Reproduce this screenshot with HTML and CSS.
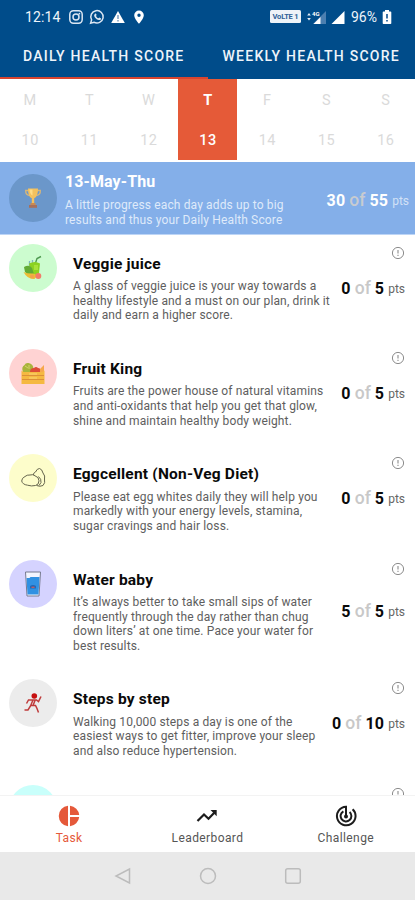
FILE: index.html
```html
<!DOCTYPE html>
<html lang="en">
<head>
<meta charset="utf-8">
<title>Daily Health Score</title>
<link rel="stylesheet" href="styles.css">
</head>
<body>
<svg width="0" height="0" class="defs">
  <symbol id="info" viewBox="0 0 14 14"><circle cx="7" cy="7" r="5.600" fill="none" stroke="#8c8c8c" stroke-width="1"/><path d="M7 3.900v3.600M7 8.800v1.200" stroke="#8c8c8c" stroke-width="1.100"/></symbol>
</svg>
<div class="app">
  <header class="top">
    <div class="status">
      <span class="time">12:14</span>
      <svg class="left-icons" width="78" height="16" viewBox="0 0 78 16">
        <g fill="none" stroke="#dbe6f2" stroke-width="1.500">
          <rect x="1.800" y="1.800" width="12.400" height="12.400" rx="3.600"/><circle cx="8" cy="8" r="3"/>
          <path d="M22.600 14.200l1-3.300a6.200 6.200 0 1 1 2.300 2.300z"/>
        </g>
        <circle cx="11.400" cy="4.700" r=".9" fill="#dbe6f2"/>
        <path d="M26.600 5.200c.8-1.100 1.500-.6 2 .9l-.6.9c.6 1.200 1.300 1.800 2.400 2.300l1-.8 1.700.9c.1 1.400-1.300 1.900-2.400 1.600-2.300-.6-4.400-2.700-4.600-4.600z" fill="#dbe6f2"/>
        <path d="M50 2l6.800 12H43.200z" fill="#fff"/><path d="M50 6v4M50 11v1.500" stroke="#5b84b0" stroke-width="1.200"/>
        <path fill-rule="evenodd" d="M71 1.500a4.800 4.800 0 0 0-4.800 4.800c0 3.500 4.800 8.500 4.800 8.500s4.800-5 4.800-8.500A4.800 4.800 0 0 0 71 1.500zm0 3a1.700 1.700 0 1 1 0 3.400 1.700 1.700 0 0 1 0-3.400z" fill="#fff"/>
      </svg>
      <span class="volte">VoLTE 1</span>
      <svg class="signals" width="40" height="16" viewBox="0 0 40 16">
        <path d="M1.200 6.500l1.800-2.500 1.800 2.500zM1.200 9l1.800 2.500L4.800 9z" fill="#e6eef6"/>
        <path d="M20 2v13H7z" fill="#4c7fb0"/><path d="M14.500 8v7H7.500z" fill="#fff"/>
        <text x="6" y="7" class="fourg">4G</text>
        <path d="M38.500 2v13H25.500z" fill="#fff"/>
      </svg>
      <span class="pct">96%</span>
      <svg class="battery" width="10" height="16" viewBox="0 0 10 16"><path d="M3 1h4v1.500h1.500q.8 0 .8.800v10.900q0 .8-.8.800H1.500q-.8 0-.8-.8V3.300q0-.8.800-.8H3z" fill="#fff"/><path d="M5 5v4.500M5 11v1.500" stroke="#12528f" stroke-width="1.600"/></svg>
    </div>
    <nav class="tabs">
      <div class="tab active"><span>DAILY HEALTH SCORE</span></div>
      <div class="tab"><span>WEEKLY HEALTH SCORE</span></div>
    </nav>
  </header>

  <section class="week">
    <div class="day"><span>M</span><span>10</span></div>
    <div class="day"><span>T</span><span>11</span></div>
    <div class="day"><span>W</span><span>12</span></div>
    <div class="day today"><span class="name">T</span><span>13</span></div>
    <div class="day"><span>F</span><span>14</span></div>
    <div class="day"><span>S</span><span>15</span></div>
    <div class="day"><span>S</span><span>16</span></div>
  </section>

  <section class="summary">
    <div class="disc trophy">
      <svg width="18" height="22" viewBox="0 0 18 22">
        <path d="M4.500 3.500H1.700q-.3 4.500 4 5M13.500 3.500h2.800q.3 4.500-4 5" fill="none" stroke="#d9b777" stroke-width="1.300"/>
        <path d="M4 1.500h10c0 5.500-1.500 9-3.800 9.700v5.300H7.800v-5.300C5.500 10.500 4 7 4 1.500z" fill="#f3c15f"/>
        <path d="M5.500 2.500h3v6q-2.500-1-3-6z" fill="#ffdc86"/>
        <path d="M6.500 16h5v2h-5z" fill="#c98a52"/><path d="M5 18h8v2.800H5z" fill="#a8705a"/>
      </svg>
    </div>
    <div class="text">
      <h2>13-May-Thu</h2>
      <p>A little progress each day adds up to big<br>results and thus your Daily Health Score</p>
    </div>
    <div class="score"><b>30</b> <i>of</i> <b>55</b> <small>pts</small></div>
  </section>

  <main class="list">
    <article class="item">
      <div class="disc green">
        <svg width="24" height="26" viewBox="0 0 24 26">
          <path d="M14.500 8l1.500-4.500 4-2" fill="none" stroke="#4f9a50" stroke-width="1.400"/>
          <path d="M8.500 6v5M11.500 5v5" stroke="#7fb6bd" stroke-width="1.300"/>
          <path d="M8 8.500q6-3 11 0l-1.200 11q-4 2-7.500.5z" fill="#8bd221"/>
          <path d="M3 12q5-3 8 1l2 6q-6 2-9-2z" fill="#62ab35"/>
          <path d="M13 10h4v5h-4z" fill="#a7e239"/>
          <path d="M2.500 17q5 2 10 1.500l4 2-3 3.500q-7 .5-11-7z" fill="#edbd36"/>
          <circle cx="17.300" cy="21" r="3" fill="#f27b68"/><circle cx="11" cy="21.500" r="2" fill="#f2a24b"/>
        </svg>
      </div>
      <div class="text"><h3>Veggie juice</h3><p>A glass of veggie juice is your way towards a<br>healthy lifestyle and a must on our plan, drink it<br>daily and earn a higher score.</p></div>
      <div class="side"><svg class="info"><use href="#info"/></svg><div class="score"><b>0</b> <i>of</i> <b>5</b> <small>pts</small></div></div>
    </article>
    <article class="item">
      <div class="disc red">
        <svg width="26" height="26" viewBox="0 0 26 26">
          <path d="M3 12q-2-5 1.500-7 1-2.500 4-2 5 1 5 6l-1 3z" fill="#a9b43c"/><path d="M5 6l3 2M9 5v4" stroke="#d4d36a"/>
          <path d="M10 12q0-4 4-4 2-2 4 0 3 0 3 4z" fill="#dd4c37"/>
          <path d="M20 9l4-4v7h-4z" fill="#f6a84b"/>
          <path d="M1.500 10.500l2 1.500h19l2-1.500V24h-23z" fill="#f5b941"/>
          <path d="M2 15.500h22M2 19.500h22" stroke="#dc9038"/><path d="M9 14h8M9 18h8" stroke="#fbd475"/>
        </svg>
      </div>
      <div class="text"><h3>Fruit King</h3><p>Fruits are the power house of natural vitamins<br>and anti-oxidants that help you get that glow,<br>shine and maintain healthy body weight.</p></div>
      <div class="side"><svg class="info"><use href="#info"/></svg><div class="score"><b>0</b> <i>of</i> <b>5</b> <small>pts</small></div></div>
    </article>
    <article class="item">
      <div class="disc yellow">
        <svg width="26" height="22" viewBox="0 0 26 22" fill="none" stroke="#66664e" stroke-width="1">
          <path d="M5 9.500q2-1.800 5-1.500 3-1 5 .8 4 1.200 4 5t-3.500 4.700q-4 1-8-.3-5-.7-5.800-4.200 0-3 3.300-4.500z"/>
          <path d="M13.500 8q-.5-2 2-3 1.500-3.500 4-3.500 2.500.5 3.500 4.500 2.500 3 1.500 6 1 4-1.500 6.500-3 1.500-6.500 0M18.500 9.500q3 2.500 2.500 6l-2 3"/>
        </svg>
      </div>
      <div class="text"><h3>Eggcellent (Non-Veg Diet)</h3><p>Please eat egg whites daily they will help you<br>markedly with your energy levels, stamina,<br>sugar cravings and hair loss.</p></div>
      <div class="side"><svg class="info"><use href="#info"/></svg><div class="score"><b>0</b> <i>of</i> <b>5</b> <small>pts</small></div></div>
    </article>
    <article class="item">
      <div class="disc violet">
        <svg width="18" height="26" viewBox="0 0 18 26">
          <path d="M1.500 1h15L15 25H3z" fill="#f3f5ff" stroke="#777a90" stroke-width="1"/>
          <path d="M2.500 7h3l1-1h9L14.500 23.500h-11z" fill="#3191e2"/>
          <path d="M6 15q3-2 6 0v2.500H6z" fill="#2368b5"/><path d="M7.500 16.300h3" stroke="#d65a55" stroke-width="1.200"/>
        </svg>
      </div>
      <div class="text"><h3>Water baby</h3><p>It’s always better to take small sips of water<br>frequently through the day rather than chug<br>down liters’ at one time. Pace your water for<br>best results.</p></div>
      <div class="side"><svg class="info"><use href="#info"/></svg><div class="score"><b>5</b> <i>of</i> <b>5</b> <small>pts</small></div></div>
    </article>
    <article class="item">
      <div class="disc grey">
        <svg width="20" height="22" viewBox="0 0 20 22" fill="none" stroke="#bf3b3b" stroke-width="1.500">
          <circle cx="11.300" cy="4" r="2.800" fill="#c60f0f" stroke="none"/>
          <path d="M3.500 11.500l2-3.500h8l2 1.500 2.500-5M10 8l-2.500 6-2.500 4H1.500M8 13.500h4.500l1.500 3 1.500 4M12 8.500L10 13.500"/>
        </svg>
      </div>
      <div class="text"><h3>Steps by step</h3><p>Walking 10,000 steps a day is one of the<br>easiest ways to get fitter, improve your sleep<br>and also reduce hypertension.</p></div>
      <div class="side"><svg class="info"><use href="#info"/></svg><div class="score"><b>0</b> <i>of</i> <b>10</b> <small>pts</small></div></div>
    </article>
    <article class="item">
      <div class="disc cyan"></div>
      <div class="text"></div>
      <div class="side"><svg class="info"><use href="#info"/></svg></div>
    </article>
  </main>

  <nav class="bottom">
    <div class="dest active">
      <svg width="22" height="22" viewBox="0 0 22 22" fill="#e5593a"><path d="M10 .8v20.400A10.250 10.250 0 0 1 10 .8zM12 .8a10.250 10.250 0 0 1 9.200 9.200H12zM12 12h9.200a10.250 10.250 0 0 1-9.200 9.200z"/></svg>
      <span>Task</span>
    </div>
    <div class="dest">
      <svg width="22" height="22" viewBox="0 0 22 22"><path d="M1.500 16l6.500-6.500 4.500 4.300L19 7" fill="none" stroke="#1c1c1c" stroke-width="2.200"/><path d="M14.500 5h6.200v6.200z" fill="#1c1c1c"/></svg>
      <span>Leaderboard</span>
    </div>
    <div class="dest">
      <svg width="22" height="22" viewBox="0 0 22 22" fill="none" stroke="#1c1c1c" stroke-width="2"><path d="M17.600 4.200A9.300 9.300 0 1 1 11 1.700V11M14.600 7a5.400 5.400 0 1 1-6.200-.7"/><circle cx="11" cy="11.500" r="2" fill="#1c1c1c" stroke="none"/></svg>
      <span>Challenge</span>
    </div>
  </nav>
  <footer class="system">
    <svg width="18" height="18" viewBox="0 0 18 18"><path d="M15.500 2v14L2 9z"/></svg>
    <svg width="18" height="18" viewBox="0 0 18 18"><circle cx="9" cy="9" r="7.500"/></svg>
    <svg width="18" height="18" viewBox="0 0 18 18"><rect x="1.700" y="1.700" width="14.600" height="14.600" rx="2"/></svg>
  </footer>
</div>
</body>
</html>
```
FILE: styles.css
```css
* { box-sizing: border-box; margin: 0; padding: 0; }
body { width: 415px; height: 900px; overflow: hidden; background: #fff; font-family: Roboto, "Liberation Sans", sans-serif; }
svg { display: block; flex: none; }
.defs { position: absolute; }
.app { width: 415px; height: 900px; display: flex; flex-direction: column; overflow: hidden; }

.top { flex: none; height: 79px; background: #004c8a; color: #eef4fa; }
.status { height: 33px; padding: 0 0 0 25px; display: flex; align-items: center; }
.time { width: 43px; font-size: 14px; letter-spacing: .1px; white-space: nowrap; }
.left-icons { margin-right: 124px; }
.volte { width: 31px; height: 13px; border-radius: 1.5px; background: #eef3f8; color: #2d6096; font-size: 7.5px; line-height: 13px; font-weight: 700; text-align: center; letter-spacing: -.2px; white-space: nowrap; }
.signals { margin-left: 5px; }
.fourg { font-size: 6px; font-weight: 700; fill: #fff; }
.pct { width: 32px; margin-left: 5px; font-size: 14px; white-space: nowrap; }
.battery { margin-left: -1px; }

.tabs { height: 46px; display: flex; }
.tab { width: 207.5px; display: flex; justify-content: center; padding-top: 14px; font-size: 14px; line-height: 18px; font-weight: 500; letter-spacing: 1.25px; white-space: nowrap; }
.tab.active { border-bottom: 2px solid #d9442f; }

.week { flex: none; height: 83px; display: flex; padding-bottom: 2px; background: #fff; }
.day { flex: 1; display: flex; flex-direction: column; align-items: center; padding-top: 12px; gap: 20px; font-size: 14.5px; line-height: 20px; color: #dadada; letter-spacing: .4px; padding-left: 1px; }
.today { background: #e55a38; color: #fff; font-weight: 500; }
.today .name { font-weight: 700; }

.summary { flex: none; height: 73px; display: flex; background: #84afe9; border-bottom: 1px solid #bdd5f6; padding-left: 9px; }
.disc { flex: none; width: 48px; height: 48px; border-radius: 50%; display: flex; align-items: center; justify-content: center; }
.trophy { margin-top: 12px; background: #6b97ca; }
.summary .text { margin-left: 8px; width: 243px; padding-top: 10px; color: #fff; }
h2 { font-size: 16px; line-height: 20px; font-weight: 700; letter-spacing: .1px; }
p { font-size: 12px; line-height: 14.6px; letter-spacing: .14px; white-space: nowrap; }
.summary p { margin-top: 6px; color: #dfeafa; }
.summary .score { margin-left: auto; margin-right: 6px; margin-top: 27.5px; }
.score { font-size: 16px; line-height: 20px; white-space: nowrap; }
.score b { font-weight: 700; letter-spacing: .2px; }
.score i { font-style: normal; font-weight: 500; color: #c8c8c8; font-size: 17.5px; }
.score small { font-size: 12px; color: #666; letter-spacing: 0; vertical-align: 1px; }
.summary .score { color: #fff; }
.summary .score i { color: #c8cbd0; }
.summary .score small { color: #d2e1f6; }

.list { flex: 1; min-height: 0; overflow: hidden; padding-top: .5px; }
.item { display: flex; padding-left: 9px; min-height: 105.4px; }
.item .disc { margin-top: 8px; }
.green { background: #ccfccf; }
.red { background: #ffd3d3; }
.yellow { background: #fdfdcb; }
.violet { background: #d5d3ff; }
.grey { background: #ececec; }
.cyan { background: #c9fffb; }
.item .text { margin-left: 16px; padding: 19px 0 24.6px; width: 260px; color: #5e5e5e; }
h3 { font-size: 15.5px; line-height: 18px; font-weight: 700; letter-spacing: .2px; color: #0a0a0a; white-space: nowrap; }
.item p { margin-top: 6.6px; margin-bottom: -7px; }
.side { flex: 1; display: flex; flex-direction: column; align-items: flex-end; justify-content: center; padding-right: 10px; position: relative; color: #0a0a0a; }
.info { position: absolute; top: 10px; right: 10px; width: 14px; height: 14px; }

.bottom { flex: none; height: 57px; display: flex; border-top: 1px solid #f3f3f3; background: #fff; }
.dest { flex: 1; display: flex; flex-direction: column; align-items: center; padding-top: 9px; gap: 3px; font-size: 12px; line-height: 16px; letter-spacing: .4px; color: #555; }
.dest.active { color: #e5593a; }
.system { flex: none; height: 48px; background: #e9e9e9; display: flex; justify-content: center; gap: 67px; padding-top: 15px; }
.system path, .system circle, .system rect { fill: none; stroke: #bcbcbc; stroke-width: 1.5; }
```
